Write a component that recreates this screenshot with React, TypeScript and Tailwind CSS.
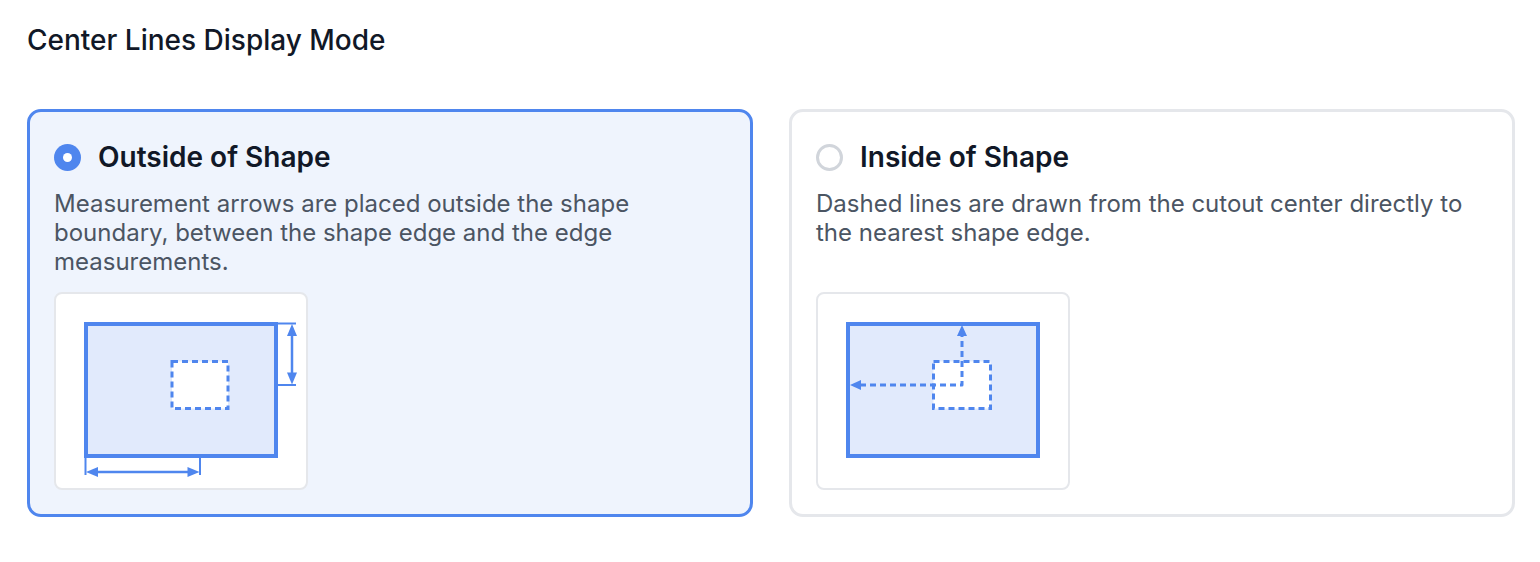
import { useState } from 'react';

type Mode = 'outside' | 'inside';

const BLUE = '#4f86ee';

// Diagram: dimension arrows drawn outside the shape
function OutsideDiagram() {
  return (
    <svg width="250" height="194" viewBox="0 0 250 194">
      <rect x="30" y="30" width="190" height="132" fill="#e1eafc" stroke={BLUE} strokeWidth="4" />
      <rect x="116" y="67.5" width="56" height="47" fill="#ffffff" stroke={BLUE} strokeWidth="3" strokeDasharray="6 4" />

      {/* vertical dimension */}
      <line x1="222" y1="29.5" x2="240" y2="29.5" stroke={BLUE} strokeWidth="2" />
      <line x1="222" y1="91" x2="240" y2="91" stroke={BLUE} strokeWidth="2" />
      <line x1="236" y1="36" x2="236" y2="84" stroke={BLUE} strokeWidth="2.5" />
      <polygon points="236,30 231,42 241,42" fill={BLUE} />
      <polygon points="236,90.5 231,78.5 241,78.5" fill={BLUE} />

      {/* horizontal dimension */}
      <line x1="29.5" y1="164" x2="29.5" y2="181" stroke={BLUE} strokeWidth="2" />
      <line x1="144" y1="164" x2="144" y2="181" stroke={BLUE} strokeWidth="2" />
      <line x1="36" y1="178" x2="138" y2="178" stroke={BLUE} strokeWidth="2.5" />
      <polygon points="30,178 42,173 42,183" fill={BLUE} />
      <polygon points="143.5,178 131.5,173 131.5,183" fill={BLUE} />
    </svg>
  );
}

// Diagram: dashed lines from cutout center to nearest edges
function InsideDiagram() {
  return (
    <svg width="250" height="194" viewBox="0 0 250 194">
      <rect x="30" y="30" width="190" height="132" fill="#e1eafc" stroke={BLUE} strokeWidth="4" />
      <rect x="115.5" y="67.5" width="57" height="47" fill="#ffffff" stroke={BLUE} strokeWidth="3" strokeDasharray="6 4" />
      <path
        d="M42 91 H144 V41"
        fill="none"
        stroke={BLUE}
        strokeWidth="3"
        strokeDasharray="6 4"
        strokeLinejoin="round"
      />
      <polygon points="144,31 139,42 149,42" fill={BLUE} />
      <polygon points="32,91 43,86 43,96" fill={BLUE} />
    </svg>
  );
}

function OptionCard({
  selected,
  title,
  description,
  onSelect,
  children,
}: {
  selected: boolean;
  title: string;
  description: string;
  onSelect: () => void;
  children: React.ReactNode;
}) {
  return (
    <button
      type="button"
      onClick={onSelect}
      className={`flex flex-col text-left rounded-[14px] border-[3px] px-6 pt-6 pb-6 ${
        selected ? 'border-[#4f86ee] bg-[#eff4fd]' : 'border-[#e5e7eb] bg-white'
      }`}
    >
      <div className="flex items-center h-[42px]">
        {selected ? (
          <span className="w-[27px] h-[27px] rounded-full bg-[#4f86ee] flex items-center justify-center">
            <span className="w-[9px] h-[9px] rounded-full bg-white" />
          </span>
        ) : (
          <span className="w-[27px] h-[27px] rounded-full border-[3px] border-[#d1d5db] bg-white" />
        )}
        <span className="ml-[17px] text-[28px] leading-[42px] font-semibold text-[#111827]">{title}</span>
      </div>
      <p className="mt-[11px] text-[24px] leading-[29px] text-[#4b5563]">{description}</p>
      <div className="mt-auto pt-[11px]">
        <div className="w-[254px] h-[198px] rounded-lg border-2 border-[#e5e7eb] bg-white">{children}</div>
      </div>
    </button>
  );
}

export default function App() {
  const [mode, setMode] = useState<Mode>('outside');

  return (
    <div className="w-[1540px] h-[562px] bg-white pl-[27px] pr-[25px] pt-[22px]" style={{ fontFamily: 'Inter, "Noto Sans", sans-serif' }}>
      <h2 className="text-[28px] leading-[36px] font-medium text-[#111827]">Center Lines Display Mode</h2>

      <div className="grid grid-cols-2 gap-9 mt-[51px] h-[408px]">
        <OptionCard
          selected={mode === 'outside'}
          title="Outside of Shape"
          description="Measurement arrows are placed outside the shape boundary, between the shape edge and the edge measurements."
          onSelect={() => setMode('outside')}
        >
          <OutsideDiagram />
        </OptionCard>
        <OptionCard
          selected={mode === 'inside'}
          title="Inside of Shape"
          description="Dashed lines are drawn from the cutout center directly to the nearest shape edge."
          onSelect={() => setMode('inside')}
        >
          <InsideDiagram />
        </OptionCard>
      </div>
    </div>
  );
}
